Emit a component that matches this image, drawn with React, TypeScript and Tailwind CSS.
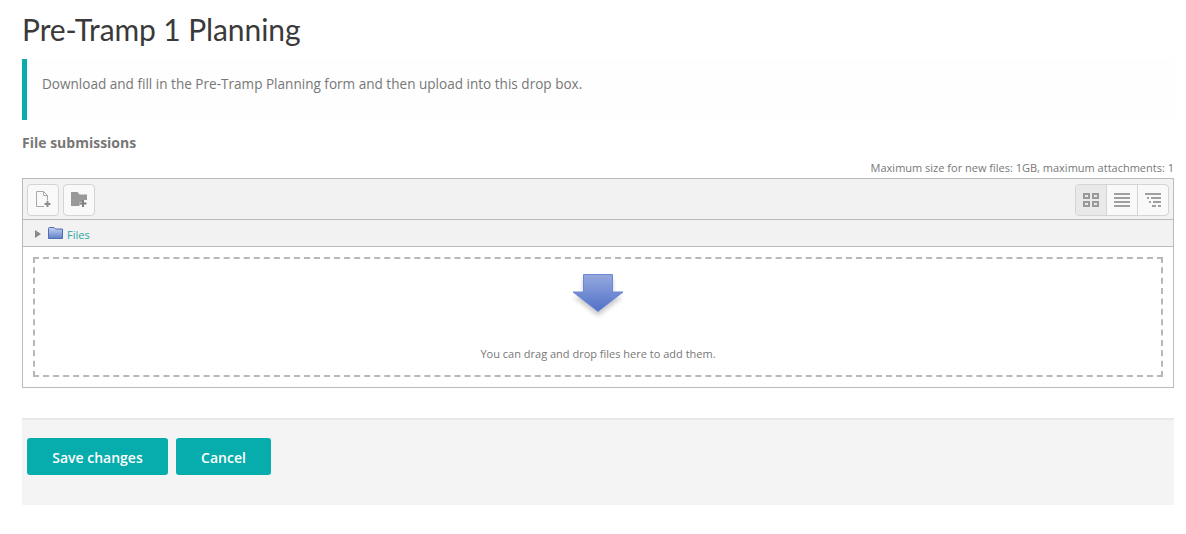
import React from "react"

const body = "font-['Open_Sans',sans-serif]"

function NewFileIcon() {
    return (
        <svg width="18" height="18" viewBox="0 0 18 18" fill="none">
            <path d="M10 15.500H2.500V0.500H9.500L13.500 4.500V9.500" stroke="#a8a8a8" strokeWidth="1" />
            <path d="M9.500 0.500V4.500H13.500" stroke="#a8a8a8" strokeWidth="1" />
            <path d="M13.500 10V16M10.500 13H16.500" stroke="#8c8c8c" strokeWidth="2" />
        </svg>
    )
}

function NewFolderIcon() {
    return (
        <svg width="18" height="18" viewBox="0 0 18 18" fill="none">
            <path d="M1 1H7.500L9.500 3.500H17V9H13V11H9.500V15H1Z" fill="#999" />
            <path d="M13 9V16M9.500 12.500H16.500" stroke="#808080" strokeWidth="2" />
        </svg>
    )
}

function GridIcon() {
    return (
        <svg width="16" height="14" viewBox="0 0 16 14" fill="#999">
            <path fillRule="evenodd" d="M0 0H7V6H0ZM2 2V4H5V2ZM9 0H16V6H9ZM11 2V4H14V2ZM0 8H7V14H0ZM2 10V12H5V10ZM9 8H16V14H9ZM11 10V12H14V10Z" />
        </svg>
    )
}

function ListIcon() {
    return (
        <svg width="16" height="14" viewBox="0 0 16 14" fill="#a0a0a0">
            <path d="M0 0H16V2H0ZM0 4H16V6H0ZM0 8H16V10H0ZM0 12H16V14H0Z" />
        </svg>
    )
}

function TreeIcon() {
    return (
        <svg width="16" height="14" viewBox="0 0 16 14" fill="#a0a0a0">
            <path d="M0 0H16V2H0ZM2 4H4V6H2ZM6 4H16V6H6ZM4 8H6V10H4ZM8 8H16V10H8ZM7 12H11V14H7ZM13 12H16V14H13Z" />
        </svg>
    )
}

function FolderIcon() {
    return (
        <svg width="15" height="12" viewBox="0 0 15 12">
            <defs>
                <linearGradient id="folderFill" x1="0" y1="0" x2="0" y2="1">
                    <stop offset="0" stopColor="#c5d2ee" />
                    <stop offset="1" stopColor="#5f7fc9" />
                </linearGradient>
            </defs>
            <path d="M0.500 1.500Q0.500 0.500 1.500 0.500H6L7.500 2H14.500V11.500H0.500Z" fill="url(#folderFill)" stroke="#4f6db3" strokeWidth="1" />
        </svg>
    )
}

function DropArrow() {
    return (
        <svg width="70" height="52" viewBox="0 0 70 52">
            <defs>
                <linearGradient id="arrowFill" x1="0" y1="0" x2="0" y2="1">
                    <stop offset="0" stopColor="#96a9de" />
                    <stop offset="1" stopColor="#4f71c8" />
                </linearGradient>
                <filter id="arrowShadow" x="-30%" y="-30%" width="160%" height="160%">
                    <feGaussianBlur stdDeviation="2" />
                </filter>
            </defs>
            <path d="M20 7H50V25H60L35 44L10 25H20Z" fill="#000" opacity="0.2" filter="url(#arrowShadow)" transform="translate(0 2)" />
            <path d="M20.500 4.500H49.500V22H60L35 41.500L10 22H20.500Z" fill="url(#arrowFill)" stroke="#6d88d2" strokeWidth="1" />
        </svg>
    )
}

export default function App() {
    return (
        <div className={`${body} w-[1186px] h-[534px] bg-white overflow-hidden px-[22px] pr-3 text-[#777]`}>
            <h1 className="font-['Lato',sans-serif] text-[30px] leading-[36px] tracking-[-0.1px] pt-[11px] h-[59px] text-[#3a3a3a]">
                Pre-Tramp 1 Planning
            </h1>
            <div className="h-[61px] border-l-[5px] border-[#07adad] bg-[#fefefe] pl-[15px] pt-[14px] text-[13.57px] leading-[22px]">
                Download and fill in the Pre-Tramp Planning form and then upload into this drop box.
            </div>
            <div className="mt-[13px] text-sm font-bold leading-5">File submissions</div>
            <div className="mt-[7px] text-right text-[11px] leading-4">
                Maximum size for new files: 1GB, maximum attachments: 1
            </div>
            <div className="mt-[2px] h-[210px] border border-[#bbb]">
                <div className="h-[41px] bg-[#f2f2f2] border-b border-[#bbb] flex justify-between items-start pt-[5px] px-1">
                    <div className="flex gap-1">
                        <div className="w-8 h-8 rounded border border-[#d4d4d4] bg-[#f9f9f9] flex items-center justify-center">
                            <NewFileIcon />
                        </div>
                        <div className="w-8 h-8 rounded border border-[#d4d4d4] bg-[#f9f9f9] flex items-center justify-center">
                            <NewFolderIcon />
                        </div>
                    </div>
                    <div className="flex h-8 rounded border border-[#d4d4d4] bg-[#f9f9f9] overflow-hidden">
                        <div className="w-[31px] bg-[#e9e9e9] flex items-center justify-center border-r border-[#d4d4d4]">
                            <GridIcon />
                        </div>
                        <div className="w-[31px] flex items-center justify-center border-r border-[#d4d4d4]">
                            <ListIcon />
                        </div>
                        <div className="w-[30px] flex items-center justify-center">
                            <TreeIcon />
                        </div>
                    </div>
                </div>
                <div className="h-[27px] bg-[#f2f2f2] border-b border-[#bbb] flex items-center pl-3">
                    <div className="mt-[2px] w-0 h-0 border-y-4 border-y-transparent border-l-[6px] border-l-[#888]" />
                    <div className="ml-[7px] flex"><FolderIcon /></div>
                    <span className="ml-[4px] mt-[4px] text-[11px] text-[#2ba6a6]">Files</span>
                </div>
                <div className="px-[10px] pt-[10px]">
                    <div className="h-[120px] border-2 border-dashed border-[#b8b8b8] flex flex-col items-center">
                        <div className="mt-[11px] flex"><DropArrow /></div>
                        <div className="mt-[24px] text-[11px] leading-4">You can drag and drop files here to add them.</div>
                    </div>
                </div>
            </div>
            <div className="mt-[30px] h-[87px] bg-[#f4f4f4] border-t-2 border-[#e8e8e8] pt-[18px] pl-[5px] flex gap-2 items-start">
                <button className="w-[141px] h-[37px] pt-[2px] rounded-[3px] bg-[#07adad] text-white text-sm font-semibold">
                    Save changes
                </button>
                <button className="w-[95px] h-[37px] pt-[2px] rounded-[3px] bg-[#07adad] text-white text-sm font-semibold">
                    Cancel
                </button>
            </div>
        </div>
    )
}
